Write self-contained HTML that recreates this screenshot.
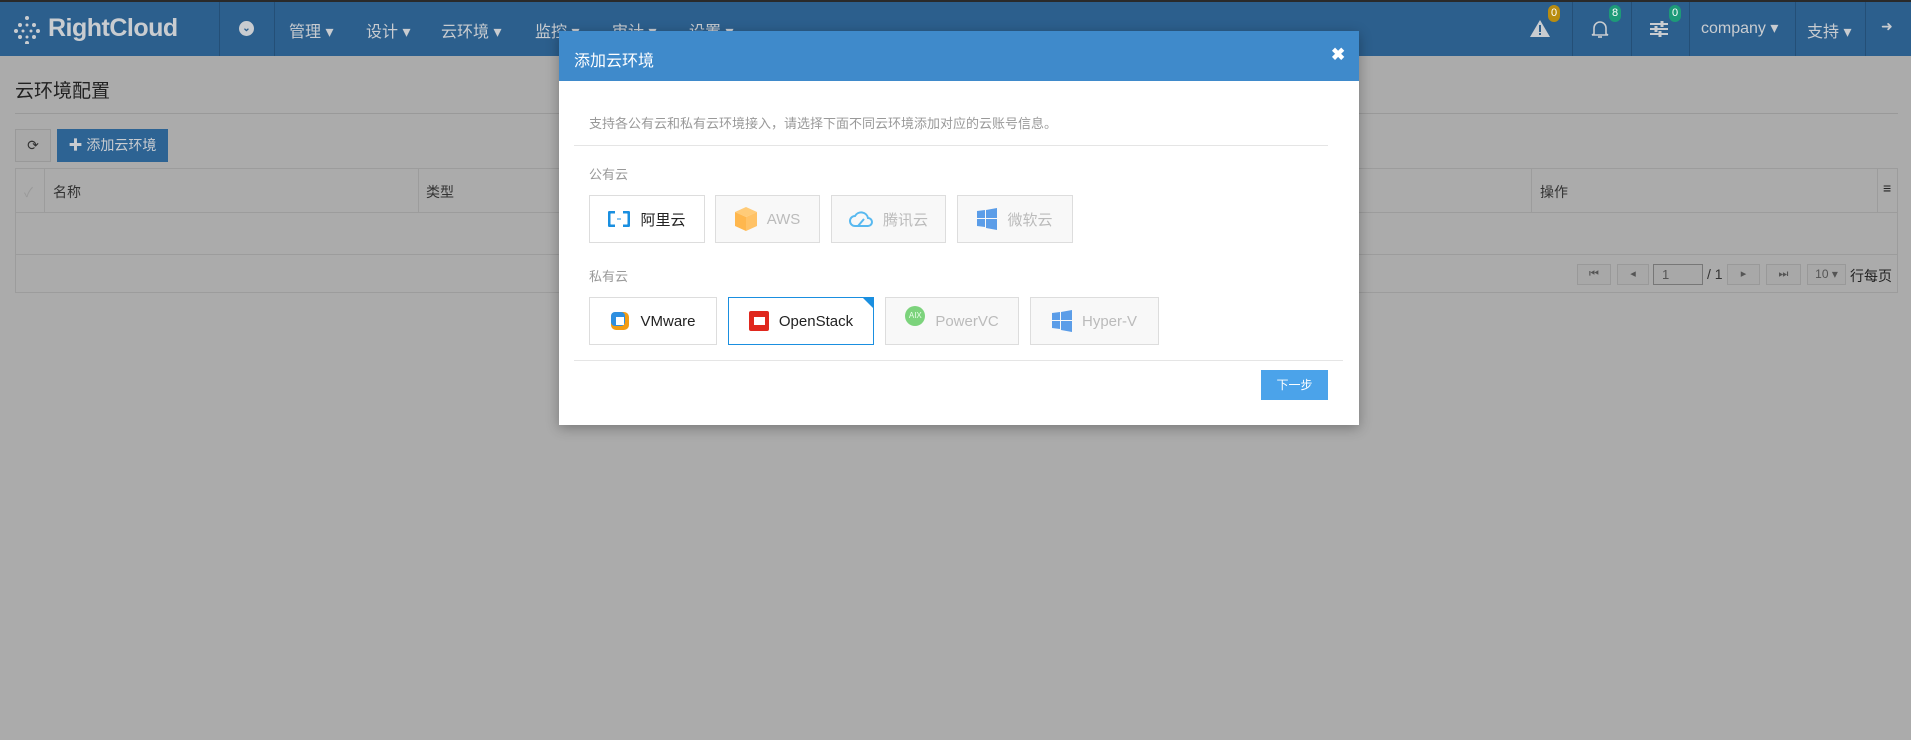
<!DOCTYPE html>
<html><head><meta charset="utf-8">
<style>
*{margin:0;padding:0;box-sizing:border-box}
body{width:1911px;height:740px;background:#ababab;font-family:"Liberation Sans","Noto Sans CJK SC",sans-serif;position:relative;overflow:hidden;color:#222}
.a{position:absolute}
.nav{left:0;top:0;width:1911px;height:56px;background:#2c5f8d;border-top:2px solid #2a2a2a}
.nt{color:#c9ccd0;font-size:16px;top:18px}
.sep{top:2px;width:1px;height:54px;background:#244f77}
.badge{font-size:11px;color:#fff;width:12px;height:17px;border-radius:6px;text-align:center;line-height:17px;top:5px}
.card{height:48px;border:1px solid #ddd;background:#f8f8f8;display:flex;align-items:center;justify-content:center;font-size:15px;color:#bbb;gap:10px}
.pb{height:21px;border:1px solid #999;background:#a8a8a8;top:264px;font-size:11px;color:#555;text-align:center;line-height:19px}
</style></head><body>
<div class="a nav"></div>
<svg class="a" style="left:14px;top:16px" width="26" height="28" viewBox="0 0 26 28" fill="#c9ccd0"><circle cx="13" cy="2" r="2"/><circle cx="6" cy="9" r="2"/><circle cx="20" cy="9" r="2"/><circle cx="13" cy="9" r="1.5"/><circle cx="2" cy="15" r="2"/><circle cx="24" cy="15" r="2"/><circle cx="9" cy="15" r="1.5"/><circle cx="17" cy="15" r="1.5"/><circle cx="6" cy="21" r="2"/><circle cx="20" cy="21" r="2"/><circle cx="13" cy="21" r="1.5"/><circle cx="13" cy="27" r="2"/></svg>
<div class="a" style="left:48px;top:14px;font-size:25px;font-weight:bold;color:#c9ccd0;letter-spacing:-0.5px">RightCloud</div>
<div class="a sep" style="left:219px"></div><div class="a sep" style="left:274px"></div>
<div class="a" style="left:239px;top:21px;width:15px;height:15px;border-radius:50%;background:#c9ccd0;color:#2c5f8d;font-size:10px;text-align:center;line-height:15px;font-weight:bold">⌄</div>
<div class="a nt" style="left:289px">管理 ▾</div>
<div class="a nt" style="left:366px">设计 ▾</div>
<div class="a nt" style="left:441px">云环境 ▾</div>
<div class="a nt" style="left:535px">监控 ▾</div>
<div class="a nt" style="left:612px">审计 ▾</div>
<div class="a nt" style="left:689px">设置 ▾</div>
<div class="a sep" style="left:1572px"></div><div class="a sep" style="left:1631px"></div><div class="a sep" style="left:1689px"></div><div class="a sep" style="left:1795px"></div><div class="a sep" style="left:1865px"></div>
<svg class="a" style="left:1530px;top:20px" width="20" height="17" viewBox="0 0 20 17"><path d="M10 0L20 17H0Z" fill="#c9ccd0"/><rect x="9" y="5" width="2" height="7" fill="#2c5f8d"/><rect x="9" y="13" width="2" height="2" fill="#2c5f8d"/></svg>
<div class="a badge" style="left:1548px;background:#b88c10">0</div>
<svg class="a" style="left:1591px;top:19px" width="18" height="20" viewBox="0 0 18 20" fill="none" stroke="#c9ccd0" stroke-width="1.6"><path d="M3 15V9a6 6 0 0 1 12 0v6l2 1H1z"/><path d="M7 18h4"/></svg>
<div class="a badge" style="left:1609px;background:#1d9a78">8</div>
<svg class="a" style="left:1650px;top:21px" width="18" height="16" viewBox="0 0 18 16" stroke="#c9ccd0" stroke-width="2"><path d="M0 3h18M0 8h18M0 13h18"/><path d="M12 0v6M6 5v6M10 10v6" stroke-width="3"/></svg>
<div class="a badge" style="left:1669px;background:#1d9a78">0</div>
<div class="a nt" style="left:1701px">company ▾</div>
<div class="a nt" style="left:1807px">支持 ▾</div>
<div class="a nt" style="left:1881px;font-size:14px">➜</div>

<div class="a" style="left:15px;top:76px;font-size:19px;color:#222">云环境配置</div>
<div class="a" style="left:15px;top:113px;width:1883px;height:1px;background:#999"></div>
<div class="a" style="left:15px;top:129px;width:36px;height:33px;border:1px solid #999;background:#a8a8a8;text-align:center;line-height:31px;font-size:14px;color:#333">⟳</div>
<div class="a" style="left:57px;top:129px;width:111px;height:33px;background:#2d6393;color:#c9ccd0;font-size:14px;line-height:33px;text-align:center">✚ 添加云环境</div>
<div class="a" style="left:15px;top:168px;width:1883px;height:125px;border:1px solid #9c9c9c"></div>
<div class="a" style="left:15px;top:212px;width:1883px;height:1px;background:#9c9c9c"></div>
<div class="a" style="left:15px;top:254px;width:1883px;height:1px;background:#9c9c9c"></div>
<div class="a" style="left:44px;top:168px;width:1px;height:44px;background:#9c9c9c"></div>
<div class="a" style="left:418px;top:168px;width:1px;height:44px;background:#9c9c9c"></div>
<div class="a" style="left:1531px;top:168px;width:1px;height:44px;background:#9c9c9c"></div>
<div class="a" style="left:1877px;top:168px;width:1px;height:44px;background:#9c9c9c"></div>
<div class="a" style="left:24px;top:182px;color:#999;font-size:13px">✓</div>
<div class="a" style="left:53px;top:182px;font-size:14px;color:#333">名称</div>
<div class="a" style="left:426px;top:182px;font-size:14px;color:#333">类型</div>
<div class="a" style="left:1540px;top:182px;font-size:14px;color:#333">操作</div>
<div class="a" style="left:1883px;top:180px;font-size:14px;color:#222">≡</div>
<div class="a pb" style="left:1577px;width:34px">⏮</div>
<div class="a pb" style="left:1617px;width:32px">◂</div>
<div class="a pb" style="left:1653px;width:50px;border-color:#777;text-align:left;padding-left:8px;font-size:13px">1</div>
<div class="a" style="left:1707px;top:266px;font-size:14px;color:#333">/ 1</div>
<div class="a pb" style="left:1727px;width:33px">▸</div>
<div class="a pb" style="left:1766px;width:35px">⏭</div>
<div class="a pb" style="left:1807px;width:39px;font-size:12px">10 ▾</div>
<div class="a" style="left:1850px;top:266px;font-size:14px;color:#222">行每页</div>

<!-- modal -->
<div class="a" style="left:559px;top:31px;width:800px;height:394px;background:#fff;box-shadow:0 3px 12px rgba(0,0,0,.3)"></div>
<div class="a" style="left:559px;top:31px;width:800px;height:50px;background:#3f8acb"></div>
<div class="a" style="left:574px;top:47px;color:#fff;font-size:16px">添加云环境</div>
<div class="a" style="left:1331px;top:45px;color:#fff;font-size:17px;font-weight:bold">✖</div>
<div class="a" style="left:589px;top:113px;color:#999;font-size:13px">支持各公有云和私有云环境接入，请选择下面不同云环境添加对应的云账号信息。</div>
<div class="a" style="left:574px;top:145px;width:754px;height:1px;background:#e5e5e5"></div>
<div class="a" style="left:589px;top:164px;color:#999;font-size:13px">公有云</div>
<div class="a card" style="left:589px;top:195px;width:116px;background:#fff;color:#222"><svg width="22" height="16" viewBox="0 0 22 16"><path d="M7 1H3Q1 1 1 3v10q0 2 2 2h4M15 1h4q2 0 2 2v10q0 2-2 2h-4" fill="none" stroke="#1a8fe0" stroke-width="3"/><path d="M9 8h4" stroke="#1a8fe0" stroke-width="1"/></svg>阿里云</div>
<div class="a card" style="left:715px;top:195px;width:105px"><svg width="22" height="24" viewBox="0 0 22 24"><path d="M11 0L22 5 11 10 0 5z" fill="#ffcb78"/><path d="M0 5l11 5v14L0 19z" fill="#ffb74d"/><path d="M22 5l-11 5v14l11-5z" fill="#ffc266"/></svg>AWS</div>
<div class="a card" style="left:831px;top:195px;width:115px"><svg width="24" height="18" viewBox="0 0 24 18" fill="none" stroke="#58b9f0" stroke-width="2"><path d="M6 16a5 5 0 0 1 0-10 7 7 0 0 1 13 2 4 4 0 0 1 0 8z"/><path d="M9 16l6-7"/></svg>腾讯云</div>
<div class="a card" style="left:957px;top:195px;width:116px"><svg width="20" height="22" viewBox="0 0 20 22" fill="#5b9de8"><path d="M0 3l8-1v8H0zM9 2l11-2v10H9zM0 11h8v8l-8-1zM9 11h11v11l-11-2z"/></svg>微软云</div>
<div class="a" style="left:589px;top:266px;color:#999;font-size:13px">私有云</div>
<div class="a card" style="left:589px;top:297px;width:128px;background:#fff;color:#222"><svg width="20" height="20" viewBox="0 0 20 20"><rect x="1" y="1" width="18" height="18" rx="5" fill="#f39c12"/><rect x="1" y="1" width="14" height="14" rx="4" fill="#2e8fe0"/><rect x="6" y="6" width="8" height="8" fill="#fff"/></svg>VMware</div>
<div class="a card" style="left:728px;top:297px;width:146px;background:#fff;color:#222;border-color:#1a8fe0"><svg width="20" height="20" viewBox="0 0 20 20"><rect x="0" y="0" width="20" height="20" rx="2" fill="#e0281e"/><rect x="5" y="6" width="11" height="8" fill="#fff"/></svg>OpenStack<div class="a" style="right:0;top:0;width:0;height:0;border-top:10px solid #1a8fe0;border-left:10px solid transparent"></div></div>
<div class="a card" style="left:885px;top:297px;width:134px"><div style="width:20px;height:20px;border-radius:50%;background:#7cd37c;color:#e8ffe8;font-size:8px;text-align:center;line-height:20px;margin-top:-10px">AIX</div>PowerVC</div>
<div class="a card" style="left:1030px;top:297px;width:129px"><svg width="20" height="22" viewBox="0 0 20 22" fill="#5b9de8"><path d="M0 3l8-1v8H0zM9 2l11-2v10H9zM0 11h8v8l-8-1zM9 11h11v11l-11-2z"/></svg>Hyper-V</div>
<div class="a" style="left:574px;top:360px;width:769px;height:1px;background:#e5e5e5"></div>
<div class="a" style="left:1261px;top:370px;width:67px;height:30px;background:#4ba3ea;color:#fff;font-size:12px;text-align:center;line-height:30px">下一步</div>
</body></html>
